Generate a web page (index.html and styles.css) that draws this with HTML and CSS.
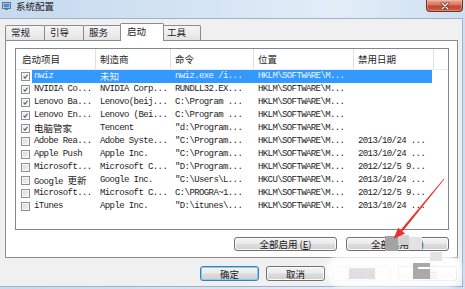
FILE: index.html
```html
<!DOCTYPE html>
<html lang="zh-CN">
<head>
<meta charset="utf-8">
<title>系统配置</title>
<link rel="stylesheet" href="styles.css">
</head>
<body>
<div class="window">
  <div class="titlebar">
    <svg class="app-icon" viewBox="0 0 9 8" width="9" height="8">
      <rect x="0.5" y="0.5" width="8" height="6" fill="#dfe6ee" stroke="#6b7788"/>
      <rect x="1.5" y="1.5" width="6" height="4" fill="#4b8fd6"/>
      <rect x="3" y="7" width="3" height="1" fill="#6b7788"/>
    </svg>
    <span class="title">系统配置</span>
    <div class="close">
      <svg viewBox="0 0 10 8" width="10" height="8">
        <path d="M2 1 L8 7 M8 1 L2 7" stroke="#5a1e16" stroke-width="2.6" stroke-linecap="round"/>
        <path d="M2 1 L8 7 M8 1 L2 7" stroke="#ffffff" stroke-width="1.4" stroke-linecap="round"/>
      </svg>
    </div>
  </div>

  <div class="client">
    <div class="tabs">
      <div class="tab">常规</div>
      <div class="tab">引导</div>
      <div class="tab">服务</div>
      <div class="tab active">启动</div>
      <div class="tab">工具</div>
    </div>

    <div class="panel">
      <div class="list">
        <div class="list-head">
          <div class="th th-first">启动项目</div>
          <div class="th">制造商</div>
          <div class="th">命令</div>
          <div class="th">位置</div>
          <div class="th">禁用日期</div>
          <div class="th th-fill"></div>
        </div>

        <div class="row">
          <span class="chk checked"><svg viewBox="0 0 9 9"><path d="M2 4.6 L3.9 6.6 L7.1 2.2" fill="none" stroke="#3f5a8c" stroke-width="1.4"/></svg></span>
          <div class="cells selected">
            <span>nwiz</span><span class="cjk">未知</span><span>nwiz.exe /i...</span><span>HKLM\SOFTWARE\M...</span><span></span>
          </div>
        </div>
        <div class="row">
          <span class="chk checked"><svg viewBox="0 0 9 9"><path d="M2 4.6 L3.9 6.6 L7.1 2.2" fill="none" stroke="#3f5a8c" stroke-width="1.4"/></svg></span>
          <div class="cells">
            <span>NVIDIA Co...</span><span>NVIDIA Corp...</span><span>RUNDLL32.EX...</span><span>HKLM\SOFTWARE\M...</span><span></span>
          </div>
        </div>
        <div class="row">
          <span class="chk checked"><svg viewBox="0 0 9 9"><path d="M2 4.6 L3.9 6.6 L7.1 2.2" fill="none" stroke="#3f5a8c" stroke-width="1.4"/></svg></span>
          <div class="cells">
            <span>Lenovo Ba...</span><span>Lenovo(beij...</span><span>C:\Program ...</span><span>HKLM\SOFTWARE\M...</span><span></span>
          </div>
        </div>
        <div class="row">
          <span class="chk checked"><svg viewBox="0 0 9 9"><path d="M2 4.6 L3.9 6.6 L7.1 2.2" fill="none" stroke="#3f5a8c" stroke-width="1.4"/></svg></span>
          <div class="cells">
            <span>Lenovo En...</span><span>Lenovo (Bei...</span><span>C:\Program ...</span><span>HKLM\SOFTWARE\M...</span><span></span>
          </div>
        </div>
        <div class="row">
          <span class="chk checked"><svg viewBox="0 0 9 9"><path d="M2 4.6 L3.9 6.6 L7.1 2.2" fill="none" stroke="#3f5a8c" stroke-width="1.4"/></svg></span>
          <div class="cells">
            <span class="cjk">电脑管家</span><span>Tencent</span><span>"d:\Program...</span><span>HKLM\SOFTWARE\M...</span><span></span>
          </div>
        </div>
        <div class="row">
          <span class="chk"></span>
          <div class="cells">
            <span>Adobe Rea...</span><span>Adobe Syste...</span><span>"C:\Program...</span><span>HKLM\SOFTWARE\M...</span><span>2013/10/24 ...</span>
          </div>
        </div>
        <div class="row">
          <span class="chk"></span>
          <div class="cells">
            <span>Apple Push</span><span>Apple Inc.</span><span>"C:\Program...</span><span>HKLM\SOFTWARE\M...</span><span>2013/10/24 ...</span>
          </div>
        </div>
        <div class="row">
          <span class="chk"></span>
          <div class="cells">
            <span>Microsoft...</span><span>Microsoft C...</span><span>"D:\Program...</span><span>HKLM\SOFTWARE\M...</span><span>2012/12/5 9...</span>
          </div>
        </div>
        <div class="row">
          <span class="chk"></span>
          <div class="cells">
            <span>Google <span class="cjk">更新</span></span><span>Google Inc.</span><span>"C:\Users\L...</span><span>HKCU\SOFTWARE\M...</span><span>2013/10/24 ...</span>
          </div>
        </div>
        <div class="row">
          <span class="chk"></span>
          <div class="cells">
            <span>Microsoft...</span><span>Microsoft C...</span><span>C:\PROGRA~1...</span><span>HKLM\SOFTWARE\M...</span><span>2012/12/5 9...</span>
          </div>
        </div>
        <div class="row">
          <span class="chk"></span>
          <div class="cells">
            <span>iTunes</span><span>Apple Inc.</span><span>"D:\itunes\...</span><span>HKLM\SOFTWARE\M...</span><span>2013/10/24 ...</span>
          </div>
        </div>
      </div>

      <div class="panel-buttons">
        <button class="btn btn-wide">全部启用 (<u>E</u>)</button>
        <button class="btn btn-wide">全部禁用 (<u>D</u>)</button>
      </div>
    </div>

    <div class="dialog-buttons">
      <button class="btn btn-default">确定</button>
      <button class="btn">取消</button>
      <button class="btn btn-disabled">应用(<u>A</u>)</button>
      <button class="btn">帮助</button>
    </div>
  </div>

  <div class="watermark">
    <div class="wm-cloud"></div>
    <div class="wm-block wm-b1"></div>
    <div class="wm-block wm-b2"></div>
    <div class="wm-block wm-b3"></div>
    <div class="wm-block wm-b4"></div>
    <div class="wm-block wm-b5"></div>
    <div class="wm-block wm-b6"></div>
    <div class="wm-dash"></div>
  </div>

  <svg class="arrow" viewBox="0 0 465 289" width="465" height="289">
    <polygon points="444.3,179.2 443.7,178.8 400.6,229.9 402.6,231.5" fill="#e8332b"/>
    <polygon points="393.5,239 398.1,227.8 405.1,233.6" fill="#e8332b"/>
  </svg>
</div>
</body>
</html>
```

FILE: styles.css
```css
* {
  box-sizing: border-box;
  margin: 0;
  padding: 0;
}

html, body {
  width: 465px;
  height: 289px;
  overflow: hidden;
}

body {
  font-family: "Noto Sans CJK SC", "Noto Sans", sans-serif;
  font-size: 9.5px;
  color: #1a1a1a;
  background: #cfe0f2;
}

.window {
  position: relative;
  width: 465px;
  height: 289px;
  display: flex;
  flex-direction: column;
  background: linear-gradient(to right, #c6d9ee 0%, #d3e3f3 40%, #e2edf8 72%, #cddff1 100%);
}

/* title bar */
.titlebar {
  height: 18px;
  flex-shrink: 0;
  display: flex;
  align-items: flex-start;
  padding-left: 2px;
}

.app-icon {
  margin-top: 2px;
  flex-shrink: 0;
}

.title {
  margin-left: 5px;
  line-height: 13px;
  color: #1b1b1b;
}

.close {
  margin-left: auto;
  margin-right: 2px;
  width: 37px;
  height: 12px;
  border: 1px solid #7a2f25;
  border-top: none;
  border-radius: 0 0 4px 4px;
  background: linear-gradient(#e9a897 0%, #d9735e 45%, #c2452d 55%, #cf5d44 100%);
  box-shadow: inset 0 0 0 1px rgba(255, 210, 200, 0.35);
  display: flex;
  align-items: center;
  justify-content: center;
}

/* client area */
.client {
  width: 463px;
  height: 269px;
  flex-shrink: 0;
  background: #f0f0f0;
  border-top: 1px solid #9fb2c8;
  border-right: 1px solid #9fb2c8;
  border-bottom: 1px solid #9fb2c8;
  display: flex;
  flex-direction: column;
}

.tabs {
  display: flex;
  align-items: flex-end;
  height: 17px;
  margin-top: 4px;
  margin-left: 5px;
}

.tab {
  position: relative;
  width: 40px;
  height: 15px;
  margin-right: -1px;
  padding-left: 5px;
  border: 1px solid #898c95;
  border-bottom: none;
  border-radius: 2px 2px 0 0;
  background: linear-gradient(#f6f6f6, #e4e4e4);
  line-height: 13px;
  color: #1a1a1a;
}

.tab.active {
  z-index: 2;
  width: 44px;
  height: 18px;
  margin-left: -2px;
  margin-right: -3px;
  margin-bottom: -1px;
  padding-left: 6px;
  background: #ffffff;
  line-height: 15px;
}

.panel {
  position: relative;
  z-index: 1;
  margin-left: 5px;
  width: 453px;
  height: 218px;
  border: 1px solid #898c95;
  background: #ffffff;
  padding: 7px 8px 0 9px;
  display: flex;
  flex-direction: column;
}

/* list view */
.list {
  width: 434px;
  height: 182px;
  border: 1px solid #828790;
  background: #ffffff;
  overflow: hidden;
}

.list-head {
  display: grid;
  grid-template-columns: 80px 75px 83px 100px 80px 1fr;
  height: 21px;
  border-bottom: 1px solid #ececec;
}

.th {
  padding-left: 4px;
  line-height: 20px;
  border-right: 1px solid #e0e0e0;
  color: #1e1e1e;
  white-space: nowrap;
}

.th-first {
  padding-left: 6px;
}

.th-fill {
  border-right: none;
}

.row {
  display: flex;
  height: 13px;
  align-items: center;
}

.chk {
  width: 9px;
  height: 9px;
  margin-left: 5px;
  margin-right: 2px;
  flex-shrink: 0;
  border: 1px solid #8e8f8f;
  background: linear-gradient(135deg, #d6d6d6, #f4f4f4);
  box-shadow: inset 0 0 0 1px #f7f7f7;
  display: flex;
}

.chk.checked {
  background: linear-gradient(135deg, #e6e6e6, #fbfbfb);
}

.chk svg {
  width: 7px;
  height: 7px;
}

.cells {
  width: 400px;
  height: 13px;
  display: grid;
  grid-template-columns: 64px 75px 83px 100px 78px;
  font-family: "Liberation Mono", "Noto Sans CJK SC", monospace;
  font-size: 9px;
  letter-spacing: -0.6px;
  line-height: 13px;
  color: #1c1c1c;
}

.cells > span {
  padding-left: 4px;
  white-space: nowrap;
  overflow: hidden;
}

.cells > span:first-child {
  padding-left: 2px;
}

.cells.selected {
  background: #3399ff;
  color: #eaf6ff;
}

.cjk {
  font-family: "Noto Sans CJK SC", sans-serif;
  font-size: 9.5px;
  letter-spacing: 0;
}

/* buttons */
.panel-buttons {
  display: flex;
  justify-content: flex-end;
  gap: 9px;
  margin-top: 7px;
}

.dialog-buttons {
  display: flex;
  justify-content: flex-end;
  gap: 7px;
  margin-top: 8px;
  margin-right: 5px;
}

.btn {
  width: 59px;
  height: 15px;
  border: 1px solid #707070;
  border-radius: 3px;
  background: linear-gradient(#f3f3f3 0%, #ebebeb 48%, #dddddd 52%, #cfcfcf 100%);
  box-shadow: inset 0 0 0 1px #fbfbfb;
  font-family: "Noto Sans CJK SC", sans-serif;
  font-size: 9.5px;
  line-height: 12px;
  color: #1a1a1a;
  text-align: center;
}

.btn u {
  text-decoration: underline;
}

.btn-wide {
  width: 103px;
  height: 14px;
  line-height: 11px;
}

.btn-default {
  border-color: #3c7fb1;
  box-shadow: inset 0 0 0 1px #7fd0f5;
}

.btn-disabled {
  color: #9a9a9a;
  border-color: #adb2b5;
  background: #f4f4f4;
}

/* overlays */
.arrow {
  position: absolute;
  left: 0;
  top: 0;
  pointer-events: none;
  z-index: 6;
}

.watermark {
  position: absolute;
  left: 0;
  top: 0;
  width: 465px;
  height: 289px;
  pointer-events: none;
  z-index: 5;
}

.wm-cloud {
  position: absolute;
  left: 327px;
  top: 255px;
  width: 134px;
  height: 32px;
  border-radius: 14px;
  background: rgba(255, 255, 255, 0.9);
  filter: blur(2px);
}

.wm-block {
  position: absolute;
}

.wm-b1 { left: 385px; top: 236px; width: 13px; height: 15px; background: #a3a3a3; }
.wm-b2 { left: 398px; top: 235px; width: 11px; height: 10px; background: #d2d2d2; }
.wm-b3 { left: 409px; top: 237px; width: 13px; height: 13px; background: #e3e3e3; }
.wm-b4 { left: 413px; top: 263px; width: 17px; height: 16px; background: #a9a9a9; }
.wm-b5 { left: 349px; top: 268px; width: 26px; height: 11px; background: rgba(200, 200, 200, 0.55); }
.wm-b6 { left: 430px; top: 252px; width: 12px; height: 9px; background: #e4e4e4; }

.wm-dash {
  position: absolute;
  left: 418px;
  top: 267px;
  width: 12px;
  height: 2px;
  background: #ffffff;
}
```
